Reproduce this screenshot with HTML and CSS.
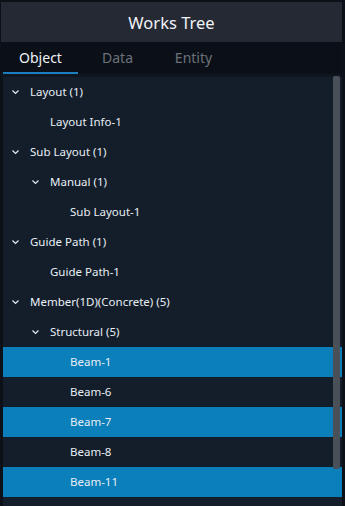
FILE: index.html
```
<!DOCTYPE html>
<html>
<head>
<meta charset="utf-8">
<link rel="stylesheet" href="styles.css">
</head>
<body>
<div class="panel">
  <div class="header">Works Tree</div>
  <div class="tabs">
    <div class="tab active">Object</div>
    <div class="tab data">Data</div>
    <div class="tab entity">Entity</div>
  </div>
  <div class="tree">
    <div class="rows">
      <div class="row l0"><span class="chev"><svg width="7" height="5" viewBox="0 0 7 5"><path d="M0.5 0.5 L3.5 3.5 L6.5 0.5" fill="none" stroke="#e6ebf2" stroke-width="1.2"/></svg></span>Layout (1)</div>
      <div class="row l1 leaf">Layout Info-1</div>
      <div class="row l0"><span class="chev"><svg width="7" height="5" viewBox="0 0 7 5"><path d="M0.5 0.5 L3.5 3.5 L6.5 0.5" fill="none" stroke="#e6ebf2" stroke-width="1.2"/></svg></span>Sub Layout (1)</div>
      <div class="row l1"><span class="chev"><svg width="7" height="5" viewBox="0 0 7 5"><path d="M0.5 0.5 L3.5 3.5 L6.5 0.5" fill="none" stroke="#e6ebf2" stroke-width="1.2"/></svg></span>Manual (1)</div>
      <div class="row l2 leaf">Sub Layout-1</div>
      <div class="row l0"><span class="chev"><svg width="7" height="5" viewBox="0 0 7 5"><path d="M0.5 0.5 L3.5 3.5 L6.5 0.5" fill="none" stroke="#e6ebf2" stroke-width="1.2"/></svg></span>Guide Path (1)</div>
      <div class="row l1 leaf">Guide Path-1</div>
      <div class="row l0"><span class="chev"><svg width="7" height="5" viewBox="0 0 7 5"><path d="M0.5 0.5 L3.5 3.5 L6.5 0.5" fill="none" stroke="#e6ebf2" stroke-width="1.2"/></svg></span>Member(1D)(Concrete) (5)</div>
      <div class="row l1"><span class="chev"><svg width="7" height="5" viewBox="0 0 7 5"><path d="M0.5 0.5 L3.5 3.5 L6.5 0.5" fill="none" stroke="#e6ebf2" stroke-width="1.2"/></svg></span>Structural (5)</div>
      <div class="row l2 leaf sel">Beam-1</div>
      <div class="row l2 leaf">Beam-6</div>
      <div class="row l2 leaf sel">Beam-7</div>
      <div class="row l2 leaf">Beam-8</div>
      <div class="row l2 leaf sel">Beam-11</div>
    </div>
    <div class="scrollbar"></div>
  </div>
</div>
</body>
</html>
```
FILE: styles.css
```
html, body {
  margin: 0;
  padding: 0;
  background: #0c1118;
}
body {
  width: 345px;
  height: 506px;
  overflow: hidden;
  font-family: "Noto Sans", "DejaVu Sans", sans-serif;
  color: #e8eef5;
}
.panel {
  display: flex;
  flex-direction: column;
  height: 506px;
  padding: 2px 3px 0 1px;
  box-sizing: border-box;
}
.header {
  height: 40px;
  background: #252933;
  display: flex;
  align-items: center;
  justify-content: center;
  font-size: 16.5px;
  color: #f0f3f7;
}
.tabs {
  height: 32px;
  display: flex;
  background: #0b1018;
  padding-left: 2px;
  margin-right: 1px;
  border-bottom: 3px solid #0f161f;
}
.tab {
  width: 75px;
  display: flex;
  align-items: center;
  justify-content: center;
  font-size: 14px;
  color: #6c7178;
  box-sizing: border-box;
  padding-bottom: 1px;
}
.tab.active {
  color: #eef2f6;
  border-bottom: 2px solid #1d7fc0;
  padding-top: 1px;
  padding-bottom: 0;
}
.tab.data { width: 79px; }
.tab.entity { width: 73px; }
.tree {
  position: relative;
  flex: 1;
  background: #141e2b;
  margin-left: 2px;
}
.rows {
  display: flex;
  flex-direction: column;
}
.row {
  height: 30px;
  display: flex;
  align-items: center;
  font-size: 11.5px;
  white-space: nowrap;
  box-sizing: border-box;
  padding-bottom: 1px;
}
.chev {
  width: 27px;
  display: flex;
  align-items: center;
  padding-left: 9px;
  padding-top: 1px;
  box-sizing: border-box;
}
.row.l0 { padding-left: 0; }
.row.l1 { padding-left: 20px; }
.row.l2 { padding-left: 40px; }
.row.leaf { padding-left: 47px; }
.row.l2.leaf { padding-left: 67px; }
.row.sel { background: #0a7fb9; }
.scrollbar {
  position: absolute;
  right: 2px;
  top: -1px;
  width: 7px;
  height: 393px;
  background: #4a5058;
  border-radius: 2px;
}
```
